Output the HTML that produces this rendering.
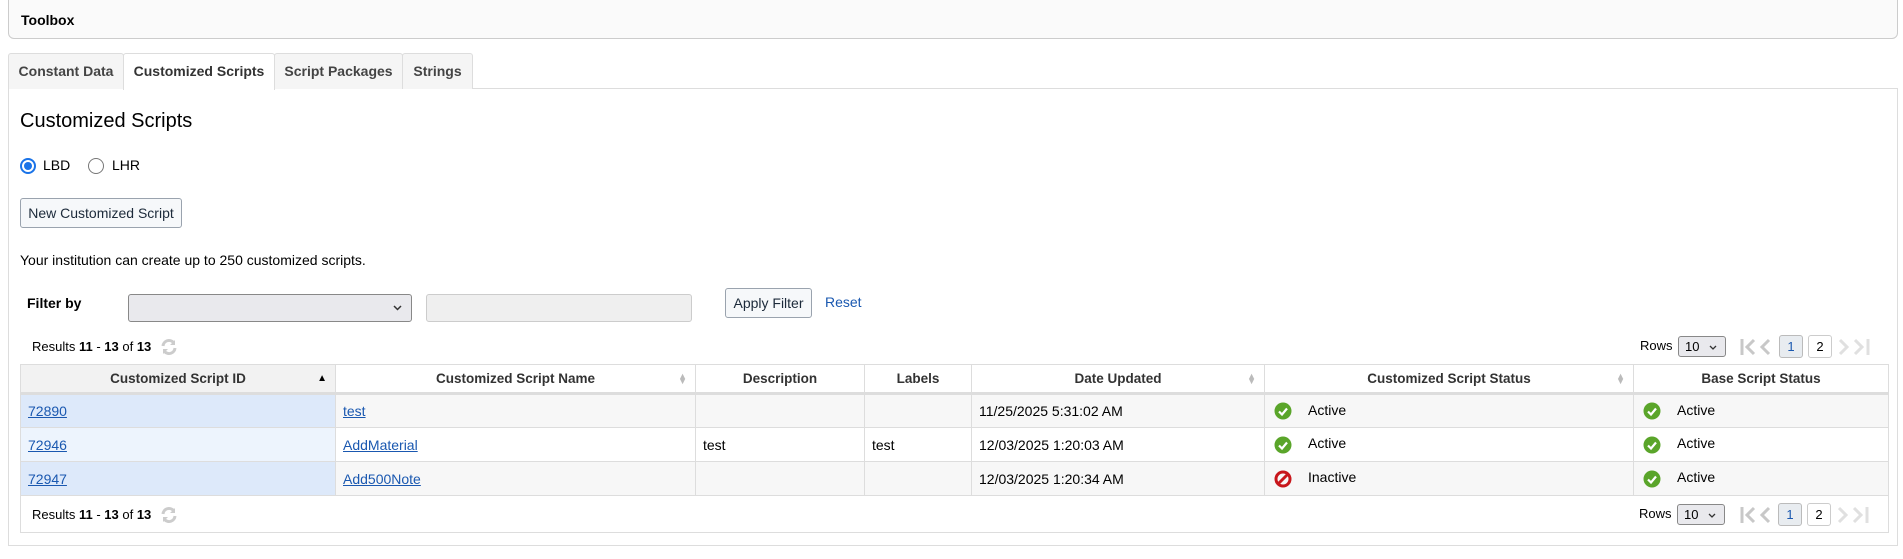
<!DOCTYPE html>
<html><head><meta charset="utf-8"><style>
*{box-sizing:border-box;margin:0;padding:0}
body{width:1903px;height:559px;background:#fff;font-family:"Liberation Sans",Arial,sans-serif;font-size:14px;color:#000;position:relative;overflow:hidden}
.a{position:absolute;white-space:nowrap}
.toolbox{left:8px;top:-6px;width:1890px;height:45px;border:1px solid #ccc;border-radius:0 0 6px 6px;background:#fafafa}
.tab{top:53px;height:36px;border:1px solid #ddd;border-bottom:none;background:#f5f5f5;font-weight:bold;color:#444;font-size:14px;line-height:34px;text-align:center;border-radius:3px 3px 0 0}
.panel{left:8px;top:88px;width:1890px;height:458px;border:1px solid #ddd}
.btn{border:1px solid #9aa3ae;border-radius:3px;background:#f6f8fa;color:#1c2a3a;text-align:center;font-size:14px}
a{color:#1a58b0;text-decoration:underline}
table{position:absolute;left:20px;top:364px;border-collapse:collapse;width:1869px}
td,th{border:1px solid #ddd;font-size:14px;height:34px;padding:0 7px;text-align:left}
th{height:29px;font-size:13.5px;color:#333;text-align:center;border-bottom:3px solid #ddd;position:relative}
tr.o td{background:#f7f7f7}
tr.o td.s{background:#dde9fa}
tr.e td.s{background:#edf4fd}
th.s{background:#f2f2f2}
.arr{position:absolute;right:8px;top:9px;font-size:9px;color:#bbb;line-height:5px}
.ico{display:inline-block;width:18px;height:18px;vertical-align:middle;margin:0 16px 0 2px}
.box{position:absolute;border:1px solid #bbb;border-radius:3px;text-align:center;height:23px;width:24px;line-height:21px;font-size:13px}
</style></head><body>
<div class="a toolbox"></div>
<div class="a" style="left:21px;top:12px;font-weight:bold;font-size:14px">Toolbox</div>

<div class="a panel"></div>
<div class="a tab" style="left:8px;width:116px">Constant Data</div>
<div class="a tab" style="left:123px;width:152px;background:#fff;height:37px;color:#333">Customized Scripts</div>
<div class="a tab" style="left:274px;width:129px">Script Packages</div>
<div class="a tab" style="left:402px;width:71px">Strings</div>

<div class="a" style="left:20px;top:110px;font-size:20px">Customized Scripts</div>

<div class="a" style="left:20px;top:158px;width:16px;height:16px;border-radius:50%;border:2px solid #1a73e8;background:#fff"><div style="position:absolute;left:2px;top:2px;width:8px;height:8px;border-radius:50%;background:#1a73e8"></div></div>
<div class="a" style="left:43px;top:157px;font-size:14px">LBD</div>
<div class="a" style="left:88px;top:158px;width:16px;height:16px;border-radius:50%;border:1px solid #777"></div>
<div class="a" style="left:112px;top:157px;font-size:14px">LHR</div>

<div class="a btn" style="left:20px;top:198px;width:162px;height:30px;line-height:28px">New Customized Script</div>

<div class="a" style="left:20px;top:252px">Your institution can create up to 250 customized scripts.</div>

<div class="a" style="left:27px;top:295px;font-weight:bold">Filter by</div>
<div class="a" style="left:128px;top:294px;width:284px;height:28px;border:1px solid #888;border-radius:3px;background:#e9e9ed"><svg style="position:absolute;right:9px;top:10px" width="9" height="6" viewBox="0 0 9 6"><path d="M1 1l3.5 3.5L8 1" stroke="#333" stroke-width="1.5" fill="none"/></svg></div>
<div class="a" style="left:426px;top:294px;width:266px;height:28px;border:1px solid #ccc;border-radius:3px;background:#efefef"></div>
<div class="a btn" style="left:725px;top:288px;width:87px;height:30px;line-height:28px">Apply Filter</div>
<div class="a" style="left:825px;top:294px;color:#1a58b0">Reset</div>

<div class="a" style="left:32px;top:339px;font-size:13px">Results <b>11</b> - <b>13</b> of <b>13</b></div>
<svg class="a" style="left:160px;top:338px" width="18" height="18" viewBox="0 0 18 18"><path d="M3 8a6 6 0 0 1 10.5-3.5M15 10a6 6 0 0 1-10.5 3.5" stroke="#ccc" stroke-width="3" fill="none"/><path d="M15 2v5h-5zM3 16v-5h5z" fill="#ccc"/></svg>

<div class="a" style="left:1640px;top:338px;font-size:13px">Rows</div>
<div class="a" style="left:1678px;top:336px;width:48px;height:21px;border:1px solid #888;border-radius:3px;background:#e9e9ed;font-size:13px;padding-left:6px;line-height:19px">10<svg style="position:absolute;right:8px;top:8px" width="8" height="5" viewBox="0 0 8 5"><path d="M1 1l3 3 3-3" stroke="#333" stroke-width="1.3" fill="none"/></svg></div>
<svg class="a" style="left:1740px;top:338px" width="34" height="18" viewBox="0 0 34 18"><path d="M2 1v16" stroke="#c8c8c8" stroke-width="3"/><path d="M14 2L7 9l7 7M29 2L22 9l7 7" stroke="#c8c8c8" stroke-width="3" fill="none"/></svg>
<div class="box" style="left:1779px;top:335px;background:#e8ecf0;color:#1a58b0">1</div>
<div class="box" style="left:1808px;top:335px;border-color:#ccc">2</div>
<svg class="a" style="left:1837px;top:338px" width="34" height="18" viewBox="0 0 34 18"><path d="M3 2l7 7-7 7M18 2l7 7-7 7" stroke="#e0e0e0" stroke-width="3" fill="none"/><path d="M31 1v16" stroke="#e0e0e0" stroke-width="3"/></svg>

<table>
<tr><th class="s" style="width:315px">Customized Script ID<span class="arr" style="color:#000;font-size:10px;top:11px">&#9650;</span></th><th style="width:360px">Customized Script Name<span class="arr">&#9650;<br>&#9660;</span></th><th style="width:169px">Description</th><th style="width:107px">Labels</th><th style="width:293px">Date Updated<span class="arr">&#9650;<br>&#9660;</span></th><th style="width:369px">Customized Script Status<span class="arr">&#9650;<br>&#9660;</span></th><th>Base Script Status</th></tr>
<tr class="o"><td class="s"><a>72890</a></td><td><a>test</a></td><td></td><td></td><td>11/25/2025 5:31:02 AM</td><td><svg class="ico" viewBox="0 0 18 18"><circle cx="9" cy="9" r="8.5" fill="#5aa52a"/><path d="M5 9.5l3 3 5-6" stroke="#fff" stroke-width="2.2" fill="none"/></svg>Active</td><td><svg class="ico" viewBox="0 0 18 18"><circle cx="9" cy="9" r="8.5" fill="#5aa52a"/><path d="M5 9.5l3 3 5-6" stroke="#fff" stroke-width="2.2" fill="none"/></svg>Active</td></tr>
<tr class="e"><td class="s"><a>72946</a></td><td><a>AddMaterial</a></td><td>test</td><td>test</td><td>12/03/2025 1:20:03 AM</td><td><svg class="ico" viewBox="0 0 18 18"><circle cx="9" cy="9" r="8.5" fill="#5aa52a"/><path d="M5 9.5l3 3 5-6" stroke="#fff" stroke-width="2.2" fill="none"/></svg>Active</td><td><svg class="ico" viewBox="0 0 18 18"><circle cx="9" cy="9" r="8.5" fill="#5aa52a"/><path d="M5 9.5l3 3 5-6" stroke="#fff" stroke-width="2.2" fill="none"/></svg>Active</td></tr>
<tr class="o"><td class="s"><a>72947</a></td><td><a>Add500Note</a></td><td></td><td></td><td>12/03/2025 1:20:34 AM</td><td><svg class="ico" viewBox="0 0 18 18"><circle cx="9" cy="9" r="7" fill="none" stroke="#c8171c" stroke-width="3"/><path d="M4.5 13.5l9-9" stroke="#c8171c" stroke-width="3"/></svg>Inactive</td><td><svg class="ico" viewBox="0 0 18 18"><circle cx="9" cy="9" r="8.5" fill="#5aa52a"/><path d="M5 9.5l3 3 5-6" stroke="#fff" stroke-width="2.2" fill="none"/></svg>Active</td></tr>
</table>
<div class="a" style="left:20px;top:496px;width:1869px;height:37px;border:1px solid #ddd;border-top:none"></div>
<div class="a" style="left:32px;top:507px;font-size:13px">Results <b>11</b> - <b>13</b> of <b>13</b></div>
<svg class="a" style="left:160px;top:506px" width="18" height="18" viewBox="0 0 18 18"><path d="M3 8a6 6 0 0 1 10.5-3.5M15 10a6 6 0 0 1-10.5 3.5" stroke="#ccc" stroke-width="3" fill="none"/><path d="M15 2v5h-5zM3 16v-5h5z" fill="#ccc"/></svg>
<div class="a" style="left:1639px;top:506px;font-size:13px">Rows</div>
<div class="a" style="left:1677px;top:504px;width:48px;height:21px;border:1px solid #888;border-radius:3px;background:#e9e9ed;font-size:13px;padding-left:6px;line-height:19px">10<svg style="position:absolute;right:8px;top:8px" width="8" height="5" viewBox="0 0 8 5"><path d="M1 1l3 3 3-3" stroke="#333" stroke-width="1.3" fill="none"/></svg></div>
<svg class="a" style="left:1740px;top:506px" width="34" height="18" viewBox="0 0 34 18"><path d="M2 1v16" stroke="#c8c8c8" stroke-width="3"/><path d="M14 2L7 9l7 7M29 2L22 9l7 7" stroke="#c8c8c8" stroke-width="3" fill="none"/></svg>
<div class="box" style="left:1778px;top:503px;background:#e8ecf0;color:#1a58b0">1</div>
<div class="box" style="left:1807px;top:503px;border-color:#ccc">2</div>
<svg class="a" style="left:1836px;top:506px" width="34" height="18" viewBox="0 0 34 18"><path d="M3 2l7 7-7 7M18 2l7 7-7 7" stroke="#e0e0e0" stroke-width="3" fill="none"/><path d="M31 1v16" stroke="#e0e0e0" stroke-width="3"/></svg>
</body></html>
